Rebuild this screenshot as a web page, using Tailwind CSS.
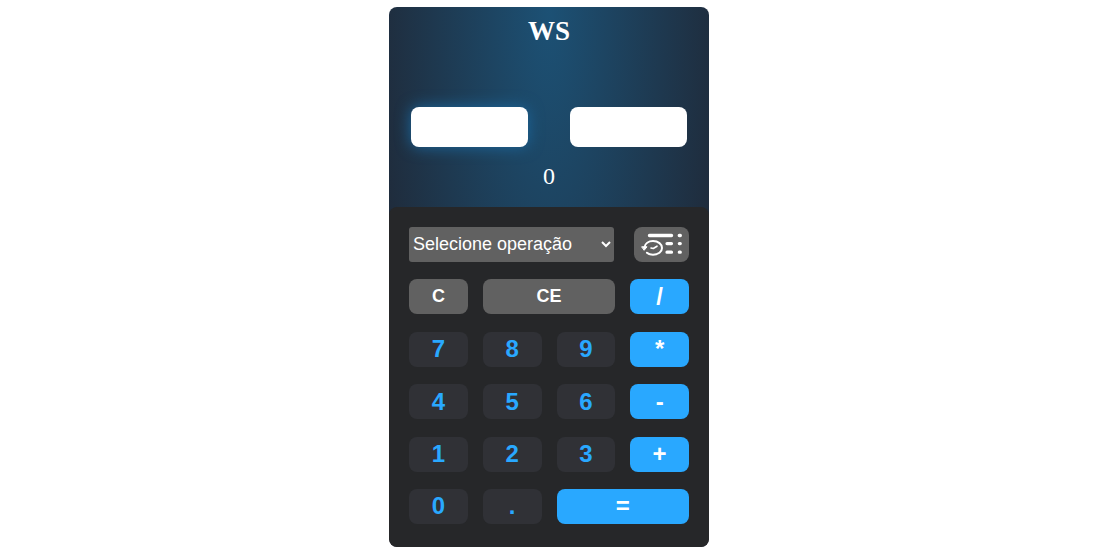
<!DOCTYPE html>
<html lang="pt-BR">
<head>
<meta charset="utf-8">
<meta name="viewport" content="width=device-width, initial-scale=1">
<title>WS</title>
<script src="https://cdn.jsdelivr.net/npm/@tailwindcss/browser@4"></script>
</head>
<body class="bg-white pt-[7px] pr-[11px]">
<main class="mx-auto w-full max-w-80 overflow-hidden rounded-lg bg-[radial-gradient(ellipse_at_top,#1c5175,#20202a)]">
  <section class="flex h-[200px] flex-col items-center px-[22px] pt-2 font-['Liberation_Serif',serif] text-white">
    <h1 class="text-[27px] leading-8 font-bold">WS</h1>
    <div class="mt-[60px] flex w-full justify-between">
      <input type="text" aria-label="Primeiro número" class="h-10 w-[117px] rounded-lg bg-white px-2 text-center text-xl text-black shadow-[0_0_15px_#1c679c] outline-none">
      <input type="text" aria-label="Segundo número" class="h-10 w-[117px] rounded-lg bg-white px-2 text-center text-xl text-black outline-none">
    </div>
    <output class="mt-[13px] text-2xl leading-8">0</output>
  </section>
  <section class="flex h-[340px] flex-col justify-between rounded-lg bg-[#262729] px-5 pt-5 pb-[23px] font-['Liberation_Sans',sans-serif] text-2xl font-bold text-white">
    <div class="flex justify-between">
      <select aria-label="Operação" class="h-[35px] w-[205px] rounded-[3px] bg-[#616161] pb-0.5 text-lg font-normal text-white">
        <option>Selecione operação</option>
        <option>Soma</option>
        <option>Subtração</option>
        <option>Multiplicação</option>
        <option>Divisão</option>
      </select>
      <button type="button" aria-label="Histórico" class="h-[35px] w-[55px] rounded-lg bg-[#616161]">
        <svg viewBox="0 0 55 35" class="block h-[35px] w-[55px]" fill="none" stroke="white" stroke-linecap="round" stroke-linejoin="round" aria-hidden="true">
          <path d="M15.500 8.500H37.500M45.300 8.500H46.300" stroke-width="3.400"/>
          <path d="M33 16.600H37.500M45.300 16.600H46.300M33 25.200H37.500M45.300 25.200H46.300" stroke-width="3.200"/>
          <path d="M10.400 20.500C11 16.700 14.600 14.100 19 14.100C24.300 14.100 28 17.200 28 21C28 24.800 24.300 27.700 19 27.700C16.300 27.700 14.300 27 12.900 25.700" stroke-width="2"/>
          <path d="M8 19.800H13L10.400 23Z" fill="white" stroke-width="1"/>
          <path d="M17 21L19.300 21.500L23 19.200" stroke-width="1.600"/>
        </svg>
      </button>
    </div>
    <div class="grid grid-cols-4 gap-x-[15px]">
      <button type="button" class="h-[35px] rounded-lg bg-[#616161] pb-0.5 text-lg">C</button>
      <button type="button" class="col-span-2 h-[35px] rounded-lg bg-[#616161] pb-0.5 text-lg">CE</button>
      <button type="button" class="h-[35px] rounded-lg bg-[#29a8ff]">/</button>
    </div>
    <div class="grid grid-cols-4 gap-x-[15px]">
      <button type="button" class="h-[35px] rounded-lg bg-[#303136] text-[#29a8ff]">7</button>
      <button type="button" class="h-[35px] rounded-lg bg-[#303136] text-[#29a8ff]">8</button>
      <button type="button" class="h-[35px] rounded-lg bg-[#303136] text-[#29a8ff]">9</button>
      <button type="button" class="h-[35px] rounded-lg bg-[#29a8ff]">*</button>
    </div>
    <div class="grid grid-cols-4 gap-x-[15px]">
      <button type="button" class="h-[35px] rounded-lg bg-[#303136] text-[#29a8ff]">4</button>
      <button type="button" class="h-[35px] rounded-lg bg-[#303136] text-[#29a8ff]">5</button>
      <button type="button" class="h-[35px] rounded-lg bg-[#303136] text-[#29a8ff]">6</button>
      <button type="button" class="h-[35px] rounded-lg bg-[#29a8ff]">-</button>
    </div>
    <div class="grid grid-cols-4 gap-x-[15px]">
      <button type="button" class="h-[35px] rounded-lg bg-[#303136] text-[#29a8ff]">1</button>
      <button type="button" class="h-[35px] rounded-lg bg-[#303136] text-[#29a8ff]">2</button>
      <button type="button" class="h-[35px] rounded-lg bg-[#303136] text-[#29a8ff]">3</button>
      <button type="button" class="h-[35px] rounded-lg bg-[#29a8ff]">+</button>
    </div>
    <div class="grid grid-cols-4 gap-x-[15px]">
      <button type="button" class="h-[35px] rounded-lg bg-[#303136] text-[#29a8ff]">0</button>
      <button type="button" class="h-[35px] rounded-lg bg-[#303136] text-[#29a8ff]">.</button>
      <button type="button" class="col-span-2 h-[35px] rounded-lg bg-[#29a8ff]">=</button>
    </div>
  </section>
</main>
</body>
</html>
